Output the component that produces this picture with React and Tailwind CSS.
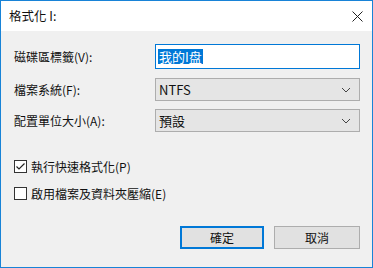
import React from 'react';

const font = { fontFamily: '"Noto Sans CJK TC", "Noto Sans", sans-serif' };

const Chevron = () => (
  <svg width="10" height="6" viewBox="0 0 10 6" className="text-[#444]">
    <path d="M1 1 L5 5 L9 1" fill="none" stroke="currentColor" strokeWidth="1" />
  </svg>
);

const SelectBox = ({ value, className }) => (
  <div className={`w-[205px] h-[23px] bg-[#e5e5e5] border border-[#adadad] flex items-center justify-between pl-[3px] pr-[8px] ${className}`}>
    <span className="text-[13px] text-[#111] leading-none">{value}</span>
    <Chevron />
  </div>
);

const Checkbox = ({ checked, label, className }) => (
  <div className={`flex items-center gap-[4px] ${className}`}>
    <div className="w-[13px] h-[13px] bg-white border border-[#333] flex items-center justify-center">
      {checked && (
        <svg width="11" height="11" viewBox="0 0 11 11">
          <path d="M1.5 5.5 L4 8 L9.5 2.5" fill="none" stroke="#222" strokeWidth="1.2" />
        </svg>
      )}
    </div>
    <span className="text-[12px] text-[#111] leading-none">{label}</span>
  </div>
);

export default function App() {
  return (
    <div style={font} className="w-[373px] h-[268px] border border-[#1883d7] bg-[#f0f0f0] flex flex-col">
      {/* Title bar */}
      <div className="h-[30px] bg-white flex items-center justify-between pl-[8px] pr-[9px]">
        <span className="text-[12.5px] text-[#111]">格式化 I:</span>
        <svg width="11" height="11" viewBox="0 0 11 11">
          <path d="M0.5 0.5 L10.5 10.5 M10.5 0.5 L0.5 10.5" stroke="#222" strokeWidth="1" />
        </svg>
      </div>

      <div className="flex-1 flex flex-col pl-[13px]">
        <div className="flex items-center mt-[13px]">
          <span className="w-[141px] text-[12px] text-[#111]">磁碟區標籤(V):</span>
          <div className="w-[205px] h-[25px] bg-white border border-[#0078d7] flex items-center pl-[2px]">
            <span className="bg-[#0078d7] text-white text-[13px] leading-[15px] px-[1px]">我的I盘</span>
          </div>
        </div>

        <div className="flex items-center mt-[9px]">
          <span className="w-[141px] text-[12px] text-[#111]">檔案系統(F):</span>
          <SelectBox value="NTFS" />
        </div>

        <div className="flex items-center mt-[8px]">
          <span className="w-[141px] text-[12px] text-[#111]">配置單位大小(A):</span>
          <SelectBox value="預設" />
        </div>

        <Checkbox checked label="執行快速格式化(P)" className="mt-[28px]" />
        <Checkbox label="啟用檔案及資料夾壓縮(E)" className="mt-[14px]" />

        <div className="flex justify-end gap-[10px] mt-[26px] pr-[12px]">
          <button className="w-[84px] h-[23px] bg-[#e1e1e1] border-2 border-[#0078d7] text-[12px] text-[#111] flex items-center justify-center">
            確定
          </button>
          <button className="w-[86px] h-[23px] bg-[#e1e1e1] border border-[#adadad] text-[12px] text-[#111] flex items-center justify-center">
            取消
          </button>
        </div>
      </div>
    </div>
  );
}
